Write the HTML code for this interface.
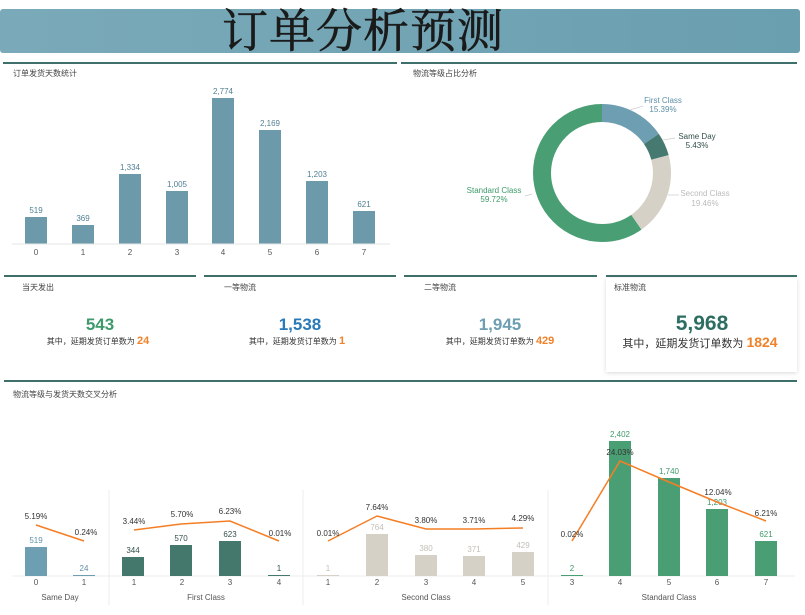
<!DOCTYPE html>
<html><head><meta charset="utf-8"><style>
body{margin:0;width:805px;height:610px;background:#fff;overflow:hidden;font-family:"Liberation Sans","Noto Sans CJK SC",sans-serif;}
svg text{font-family:"Liberation Sans","Noto Sans CJK SC",sans-serif;}
</style></head><body>
<svg width="805" height="610" viewBox="0 0 805 610" xmlns="http://www.w3.org/2000/svg">
<defs><linearGradient id="tg" x1="0" x2="1"><stop offset="0" stop-color="#7aaab9"/><stop offset="1" stop-color="#6a9fb0"/></linearGradient>
<filter id="sh" x="-10%" y="-10%" width="120%" height="130%"><feDropShadow dx="0" dy="1" stdDeviation="2" flood-opacity="0.15"/></filter></defs>
<rect x="0" y="9" width="800" height="44" rx="3" fill="url(#tg)"/>
<text x="363" y="47" text-anchor="middle" font-size="46" fill="#1a1a1a" stroke="#1a1a1a" stroke-width="0.6" style="font-family:'Noto Serif CJK SC',serif" letter-spacing="1">订单分析预测</text>

<rect x="606" y="278" width="191" height="94" fill="#fff" filter="url(#sh)"/>
<!-- panel tops -->
<g fill="#3f6f6a">
<rect x="3" y="62" width="394" height="2"/><rect x="401" y="62" width="396" height="2"/>
<rect x="4" y="275" width="192" height="2"/><rect x="204" y="275" width="192" height="2"/><rect x="404" y="275" width="193" height="2"/><rect x="606" y="275" width="191" height="2"/>
<rect x="4" y="380" width="793" height="2"/>
</g>
<g font-size="8" fill="#444">
<text x="13" y="76">订单发货天数统计</text><text x="413" y="76">物流等级占比分析</text>
<text x="22" y="290">当天发出</text><text x="224" y="290">一等物流</text><text x="424" y="290">二等物流</text><text x="614" y="290">标准物流</text>
<text x="13" y="397">物流等级与发货天数交叉分析</text>
</g>

<!-- bar chart 1 -->
<g fill="#6d9aab">
<rect x="25" y="217" width="22" height="27"/><rect x="72" y="225" width="22" height="19"/><rect x="119" y="174" width="22" height="70"/><rect x="166" y="191" width="22" height="53"/><rect x="212" y="98" width="22" height="146"/><rect x="259" y="130" width="22" height="114"/><rect x="306" y="181" width="22" height="63"/><rect x="353" y="211" width="22" height="33"/>
</g>
<line x1="12" y1="244" x2="390" y2="244" stroke="#e6e6e6"/>
<g font-size="8" fill="#4f7f93" text-anchor="middle">
<text x="36" y="213">519</text><text x="83" y="221">369</text><text x="130" y="170">1,334</text><text x="177" y="187">1,005</text><text x="223" y="94">2,774</text><text x="270" y="126">2,169</text><text x="317" y="177">1,203</text><text x="364" y="207">621</text>
</g>
<g font-size="8" fill="#555" text-anchor="middle">
<text x="36" y="255">0</text><text x="83" y="255">1</text><text x="130" y="255">2</text><text x="177" y="255">3</text><text x="223" y="255">4</text><text x="270" y="255">5</text><text x="317" y="255">6</text><text x="364" y="255">7</text>
</g>

<!-- donut -->
<g transform="rotate(-90 602 173)" fill="none" stroke-width="18">
<circle cx="602" cy="173" r="60" stroke="#6d9eb2" stroke-dasharray="58 377"/>
<circle cx="602" cy="173" r="60" stroke="#467a70" stroke-dasharray="20.5 377" stroke-dashoffset="-58"/>
<circle cx="602" cy="173" r="60" stroke="#d5d1c7" stroke-dasharray="73.4 377" stroke-dashoffset="-78.5"/>
<circle cx="602" cy="173" r="60" stroke="#4a9e73" stroke-dasharray="225.2 377" stroke-dashoffset="-151.9"/>
</g>
<g font-size="8" text-anchor="middle">
<text x="663" y="103" fill="#5d90a8">First Class</text><text x="663" y="112" fill="#5d90a8">15.39%</text>
<text x="697" y="139" fill="#33504c">Same Day</text><text x="697" y="148" fill="#33504c">5.43%</text>
<text x="705" y="196" fill="#bbb">Second Class</text><text x="705" y="206" fill="#bbb">19.46%</text>
<text x="494" y="193" fill="#3d9a6a">Standard Class</text><text x="494" y="202" fill="#3d9a6a">59.72%</text>
</g>
<g stroke="#ccc" fill="none" stroke-width="0.7"><path d="M630 110 L643 106"/><path d="M663 140 L675 138"/><path d="M668 195 L679 195"/><path d="M532 194 L525 196"/></g>

<!-- KPI -->
<g font-weight="bold" text-anchor="middle">
<text x="100" y="330" font-size="17" fill="#3d9a6a">543</text>
<text x="300" y="330" font-size="17" fill="#2a7ab8">1,538</text>
<text x="500" y="330" font-size="17" fill="#6d9eb2">1,945</text>
<text x="702" y="330" font-size="21" fill="#2e6e62">5,968</text>
</g>
<g font-size="8" fill="#333" text-anchor="middle">
<text x="98" y="344">其中，延期发货订单数为 <tspan font-size="11" font-weight="bold" fill="#f0822a">24</tspan></text>
<text x="297" y="344">其中，延期发货订单数为 <tspan font-size="11" font-weight="bold" fill="#f0822a">1</tspan></text>
<text x="500" y="344">其中，延期发货订单数为 <tspan font-size="11" font-weight="bold" fill="#f0822a">429</tspan></text>
<text x="700" y="347" font-size="11">其中，延期发货订单数为 <tspan font-size="14" font-weight="bold" fill="#f0822a">1824</tspan></text>
</g>

<!-- bottom chart -->
<g stroke="#eee"><line x1="109" y1="490" x2="109" y2="605"/><line x1="303" y1="490" x2="303" y2="605"/><line x1="548" y1="490" x2="548" y2="605"/><line x1="12" y1="576" x2="795" y2="576"/></g>
<rect x="25" y="547" width="22" height="29" fill="#6d9eb2"/><rect x="73" y="575" width="22" height="1" fill="#6d9eb2"/>
<g fill="#44786c"><rect x="122" y="557" width="22" height="19"/><rect x="170" y="545" width="22" height="31"/><rect x="219" y="541" width="22" height="35"/><rect x="268" y="575" width="22" height="1"/></g>
<g fill="#d5d1c7"><rect x="317" y="575" width="22" height="1"/><rect x="366" y="534" width="22" height="42"/><rect x="415" y="555" width="22" height="21"/><rect x="463" y="556" width="22" height="20"/><rect x="512" y="552" width="22" height="24"/></g>
<g fill="#4a9e73"><rect x="561" y="575" width="22" height="1"/><rect x="609" y="441" width="22" height="135"/><rect x="658" y="478" width="22" height="98"/><rect x="706" y="509" width="22" height="67"/><rect x="755" y="541" width="22" height="35"/></g>
<g font-size="8" text-anchor="middle">
<g fill="#5d90a8"><text x="36" y="543">519</text><text x="84" y="571">24</text></g>
<g fill="#33504c"><text x="133" y="553">344</text><text x="181" y="541">570</text><text x="230" y="537">623</text><text x="279" y="571">1</text></g>
<g fill="#c2beb6"><text x="328" y="571">1</text><text x="377" y="530">764</text><text x="426" y="551">380</text><text x="474" y="552">371</text><text x="523" y="548">429</text></g>
<g fill="#3d9a6a"><text x="572" y="571">2</text><text x="620" y="437">2,402</text><text x="669" y="474">1,740</text><text x="717" y="505">1,203</text><text x="766" y="537">621</text></g>
</g>
<g fill="none" stroke="#f57e25" stroke-width="1.5">
<polyline points="36,525 84,541"/><polyline points="134,530 181,524 230,521 279,541"/><polyline points="328,541 377,516 426,529 474,529 523,528"/><polyline points="572,541 620,461 669,482 717,502 766,521"/>
</g>
<g font-size="8" fill="#333" text-anchor="middle">
<text x="36" y="519">5.19%</text><text x="86" y="535">0.24%</text>
<text x="134" y="524">3.44%</text><text x="182" y="517">5.70%</text><text x="230" y="514">6.23%</text><text x="280" y="536">0.01%</text>
<text x="328" y="536">0.01%</text><text x="377" y="510">7.64%</text><text x="426" y="523">3.80%</text><text x="474" y="523">3.71%</text><text x="523" y="521">4.29%</text>
<text x="572" y="537">0.02%</text><text x="620" y="455">24.03%</text><text x="718" y="495">12.04%</text><text x="766" y="516">6.21%</text>
</g>
<g font-size="8" fill="#555" text-anchor="middle">
<text x="36" y="585">0</text><text x="84" y="585">1</text><text x="134" y="585">1</text><text x="182" y="585">2</text><text x="230" y="585">3</text><text x="279" y="585">4</text>
<text x="328" y="585">1</text><text x="377" y="585">2</text><text x="426" y="585">3</text><text x="474" y="585">4</text><text x="523" y="585">5</text>
<text x="572" y="585">3</text><text x="620" y="585">4</text><text x="669" y="585">5</text><text x="717" y="585">6</text><text x="766" y="585">7</text>
<text x="60" y="600">Same Day</text><text x="206" y="600">First Class</text><text x="426" y="600">Second Class</text><text x="669" y="600">Standard Class</text>
</g>
</svg>
</body></html>
